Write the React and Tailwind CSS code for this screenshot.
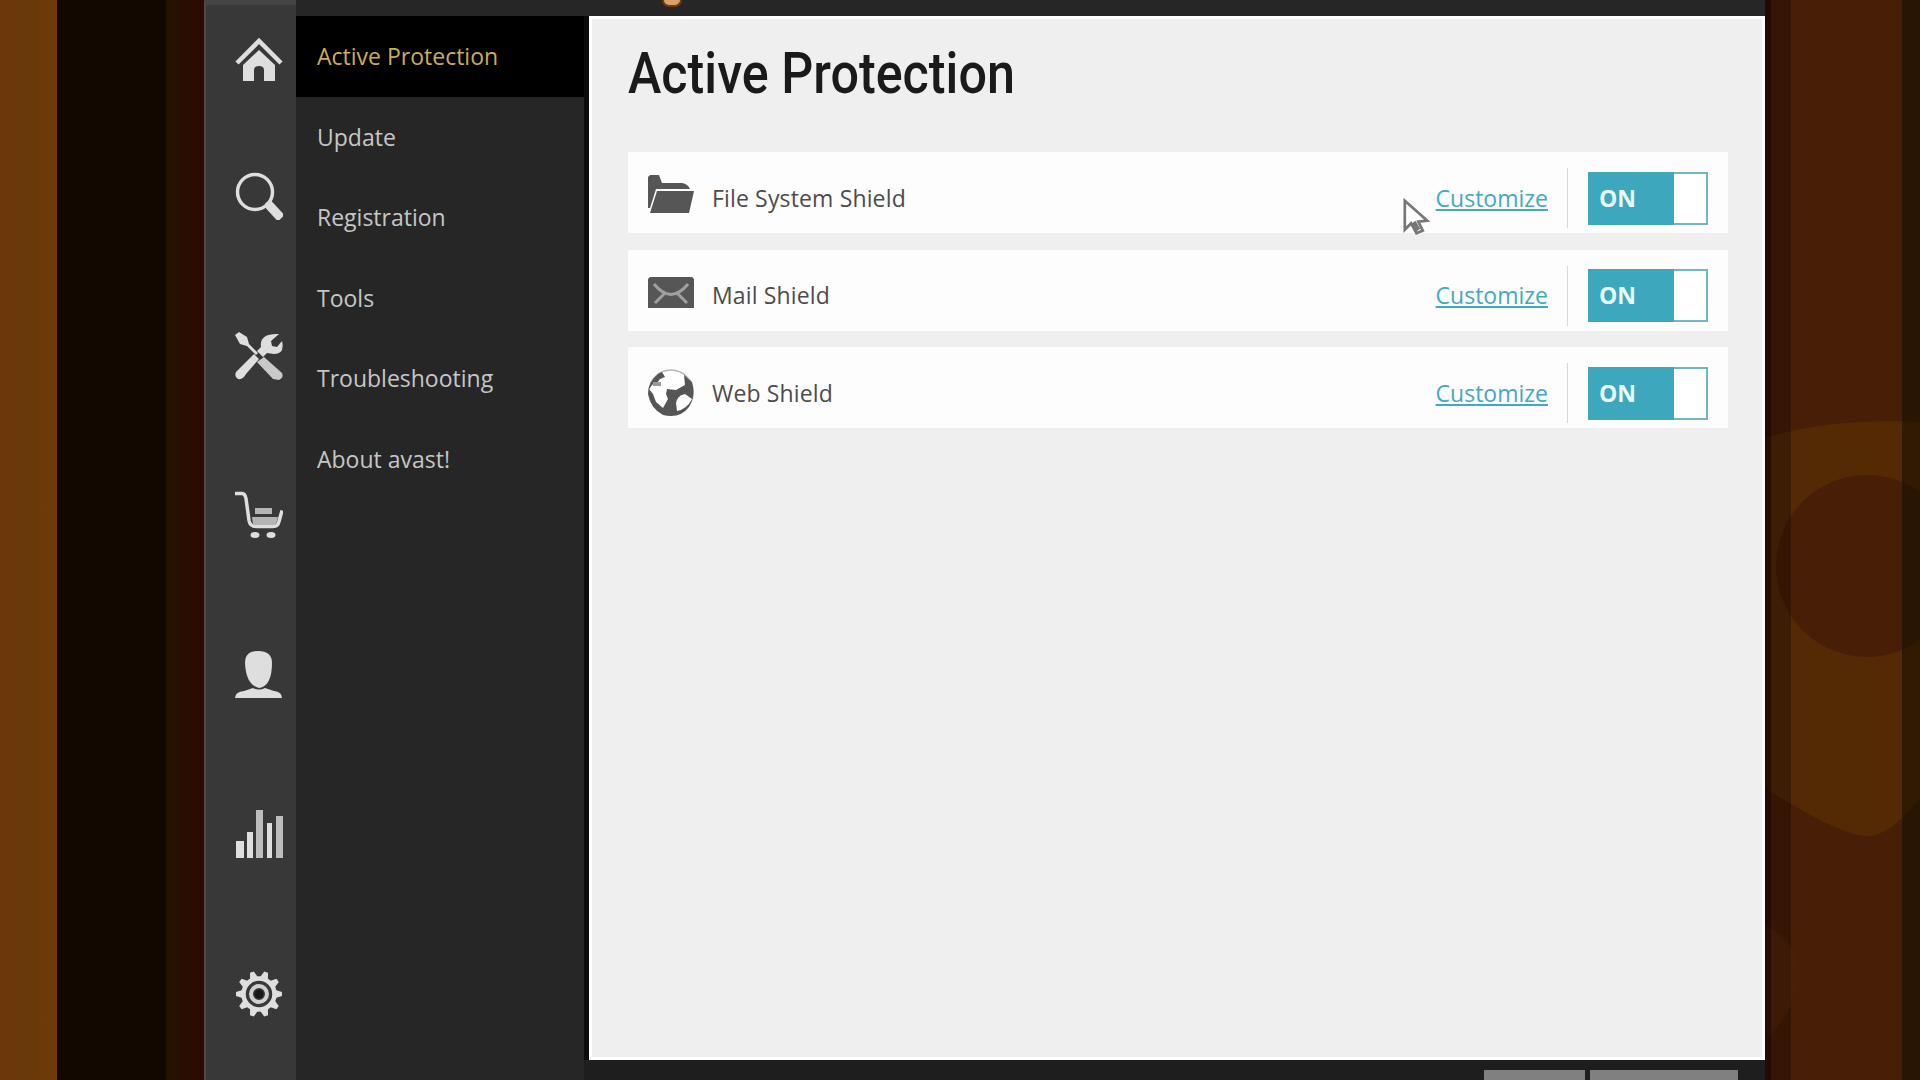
import React, { useState } from "react";

const railIcons = [
  { name: "home", slot: "h-[120px]" },
  { name: "search", slot: "h-[152px]" },
  { name: "tools", slot: "h-[168px]" },
  { name: "cart", slot: "h-[150px]" },
  { name: "user", slot: "h-[170px]" },
  { name: "stats", slot: "h-[148px]" },
  { name: "gear", slot: "h-[171px]" },
];

const menuItems = [
  "Active Protection",
  "Update",
  "Registration",
  "Tools",
  "Troubleshooting",
  "About avast!",
];

const shields = [
  { icon: "folder", label: "File System Shield" },
  { icon: "mail", label: "Mail Shield" },
  { icon: "globe", label: "Web Shield" },
];

const gearTeeth = [0, 36, 72, 108, 144, 180, 216, 252, 288, 324];

function RailIcon({ name }) {
  return (
    <svg className="h-12 w-12 shrink-0 text-[#dedede]" viewBox="0 0 48 48" fill="currentColor">
      {name === "home" && (
        <>
          <path d="M2 27L24 5l22 22" fill="none" stroke="currentColor" strokeWidth="4.5" />
          <path d="M24 14L40 29v16H29V34q0-4-5-4t-5 4v11H8V29z" />
        </>
      )}
      {name === "search" && (
        <>
          <circle cx="20" cy="20" r="17.5" fill="none" stroke="currentColor" strokeWidth="3.5" />
          <path d="M31 32l4-3 13 14-5 5-11-12z" stroke="currentColor" strokeWidth="2" strokeLinejoin="round" />
        </>
      )}
      {name === "tools" && (
        <>
          <path d="M0 3l4-3 8 5 2 7 9 9-2 2-9-9-7-2z" />
          <path d="M19 22l5 5L11 42q-3 6-8 5-4-2-2-7z" />
          <path d="M44 2l-8 7 1 5 5 1 5-6q3 13-8 13l-7-1-4 4-6-6 4-4Q24 1 44 2z" />
          <path d="M29 25L47 41q2 5-3 7l-6-1-16-17z" fill="#c9c9c9" />
        </>
      )}
      {name === "cart" && (
        <>
          <path d="M0 2.5h7q3 0 4 5l3 22q1 6 7 6h17q5 0 6-5l3-11" fill="none" stroke="currentColor" strokeWidth="3.5" />
          <path d="M20 17h17v6H20zM17 26h26l-2 8H18z" fill="#b4b4b4" />
          <ellipse cx="20" cy="44" rx="4.5" ry="3" />
          <ellipse cx="36" cy="44" rx="4.5" ry="3" />
        </>
      )}
      {name === "user" && (
        <>
          <path d="M23 0Q37 0 37 12q0 23-13 25Q11 34 10 12 10 0 23 0z" />
          <path d="M0 47q0-6 9-7l9-3q6 3 12 0l9 3q8 1 8 7z" />
        </>
      )}
      {name === "stats" && (
        <>
          <path d="M1 31h8v17H1zM12 22h6v26h-6zM32 13h5v35h-5z" />
          <path d="M21 0h7v48h-7zM41 6h7v42h-7z" fill="#bdbdbd" />
        </>
      )}
      {name === "gear" && (
        <>
          {gearTeeth.map((deg) => (
            <path key={deg} d="M19.5 9l2.5-8h4l2.5 8z" transform={`rotate(${deg + 18} 24 24)`} />
          ))}
          <circle cx="24" cy="24" r="15.5" fill="none" stroke="currentColor" strokeWidth="4.5" />
          <circle cx="24" cy="24" r="8" fill="none" stroke="#d0d0d0" strokeWidth="4" />
          <circle cx="24" cy="24" r="4.5" fill="#181818" />
        </>
      )}
    </svg>
  );
}

function ShieldIcon({ icon }) {
  return (
    <svg className="h-12 w-[46px] shrink-0 text-[#565656]" viewBox="0 0 46 48" fill="currentColor">
      {icon === "folder" && (
        <>
          <path d="M0 5V3l2-2h9l3 8h20q6 1 8 6H8L2 34H0z" />
          <path d="M9 17h37l-5 22H2z" />
        </>
      )}
      {icon === "mail" && (
        <>
          <path d="M2 5h42l2 2v29H0V7z" />
          <path d="M6 12q17 21 34 0M7 31l9-9M39 31l-9-9" fill="none" stroke="#a0a0a0" strokeWidth="3" />
        </>
      )}
      {icon === "globe" && (
        <>
          <circle cx="23" cy="23" r="22" fill="#fff" stroke="#b5b5b5" strokeWidth="1.5" />
          <path d="M10 5Q0 13 0 25q3 15 15 21 17 4 26-8 7-11 3-25l-8-7 1 10-9 5-9-1-1 5 2 5-5 9-7-6-3-8-4-5 4-5 4-1 3-4 5-2-3-5z" />
          <path d="M28 34q1-7 9-9l7 5q-5 10-15 12z" fill="#fff" />
          <path d="M5 13h8v4H5z" fill="#999" />
        </>
      )}
    </svg>
  );
}

function Toggle({ on, onClick }) {
  return (
    <button
      onClick={onClick}
      className="flex h-[53px] w-[120px] shrink-0 border-2 border-[#6fb7c5] bg-white"
    >
      <span className="-my-0.5 -ml-0.5 flex h-[53px] w-[86px] items-center bg-[#3da7be] pl-[11px] text-[23px] leading-none font-bold text-[#e9fbff]">
        {on ? "ON" : "OFF"}
      </span>
    </button>
  );
}

function ShieldRow({ icon, label }) {
  const [on, setOn] = useState(true);

  return (
    <div className="flex h-[81px] items-center bg-[#fdfdfd] pt-[11px] pr-5 pl-5">
      <ShieldIcon icon={icon} />
      <span className="ml-[18px] flex-1 text-[23px] tracking-[0.15px] text-[#4c4c4c]">{label}</span>
      <a href="#" className="mr-[19px] text-[23px] text-[#43a9bf] underline underline-offset-2">
        Customize
      </a>
      <div className="mr-5 h-[60px] w-px bg-[#dcd5d5]" />
      <Toggle on={on} onClick={() => setOn(!on)} />
    </div>
  );
}

function App() {
  const [active, setActive] = useState("Active Protection");

  return (
    <div className="relative flex h-[1080px] w-[1920px] overflow-hidden bg-[#120800] font-['Open_Sans',sans-serif]">
      {/* Desktop stripes left of the window */}
      <div className="w-[57px] shrink-0 bg-linear-to-r from-[#6d370b] via-[#693909] to-[#703a08]" />
      <div className="w-[109px] shrink-0 bg-[#120800]" />
      <div className="w-[14px] shrink-0 bg-[#241202]" />
      <div className="w-[24px] shrink-0 bg-[#2a0d02]" />

      {/* Icon rail */}
      <div className="flex w-[92px] shrink-0 flex-col border-t-[5px] border-l-2 border-t-[#454545] border-l-[#524840] bg-[#373837]">
        <div className="-mt-[5px] flex flex-col">
          {railIcons.map((item) => (
            <div key={item.name} className={`flex shrink-0 items-center justify-center pl-4 ${item.slot}`}>
              <RailIcon name={item.name} />
            </div>
          ))}
        </div>
      </div>

      {/* Settings menu */}
      <div className="flex w-[288px] shrink-0 flex-col bg-[#262626] pt-4">
        {menuItems.map((item) => (
          <button
            key={item}
            onClick={() => setActive(item)}
            className={`flex h-[80.5px] shrink-0 items-center pl-[21px] text-left text-[23px] ${
              item === active ? "bg-black text-[#c9ae55]" : "text-[#c6c6c6]"
            }`}
          >
            {item}
          </button>
        ))}
      </div>

      {/* Content */}
      <div className="flex w-[1181px] shrink-0 flex-col bg-[#262626]">
        <div className="flex h-4 shrink-0 pl-[78px]">
          <div className="h-[7px] w-5 rounded-b-full border-2 border-t-0 border-[#6b3c12] bg-[#d9a06a]" />
        </div>
        <div className="flex h-[1044px] shrink-0 bg-[#0c0c0c] pl-[5px]">
          <main className="flex flex-1 flex-col border-[3px] border-white bg-[#efefef] pr-[34px] pl-[36px]">
            <h1 className="flex h-[133px] shrink-0 items-start pt-[20px] font-['Roboto',sans-serif] text-[57px] leading-[70px] font-medium whitespace-nowrap text-[#1a1a1a]">
              <span className="origin-left scale-x-[0.882]">Active Protection</span>
            </h1>
            <div className="flex flex-col gap-[16.5px]">
              {shields.map((shield) => (
                <ShieldRow key={shield.icon} {...shield} />
              ))}
            </div>
          </main>
        </div>
        <div className="flex h-5 shrink-0 items-end justify-end gap-[5px] bg-[#1e1e1e] pr-[27px]">
          <div className="h-[10px] w-[101px] bg-[#808080]" />
          <div className="h-[10px] w-[148px] bg-[#808080]" />
        </div>
      </div>

      {/* Wallpaper right of the window */}
      <svg className="h-[1080px] w-[155px] shrink-0" viewBox="1765 0 155 1080">
        <rect x="1765" width="155" height="1080" fill="#471e06" />
        <path d="M1765 438Q1830 418 1920 422V798Q1890 836 1868 836Q1840 836 1765 788z" fill="#542a05" />
        <circle cx="1867" cy="566" r="91" fill="#471e06" />
        <rect x="1765" width="26" height="1080" fill="#1c0a02" opacity="0.4" />
        <path d="M1765 924Q1800 945 1800 975Q1796 1010 1765 1040z" fill="#4d2609" opacity="0.3" />
        <rect x="1765" width="6" height="1080" fill="#1c0300" opacity="0.6" />
        <rect x="1902" width="18" height="1080" fill="#0c0b00" opacity="0.5" />
      </svg>

      {/* Mouse pointer */}
      <svg className="absolute top-[197px] left-[1403px] h-[41px] w-[27px]" viewBox="0 0 30 43">
        <path d="M2 3v32l7-7 6 11 7-3-5-10 10-1z" fill="#fff" stroke="#777" strokeWidth="3" />
        <path d="M10 28l4-3 5 9-4 3z" fill="#777" />
      </svg>
    </div>
  );
}

export default App;
